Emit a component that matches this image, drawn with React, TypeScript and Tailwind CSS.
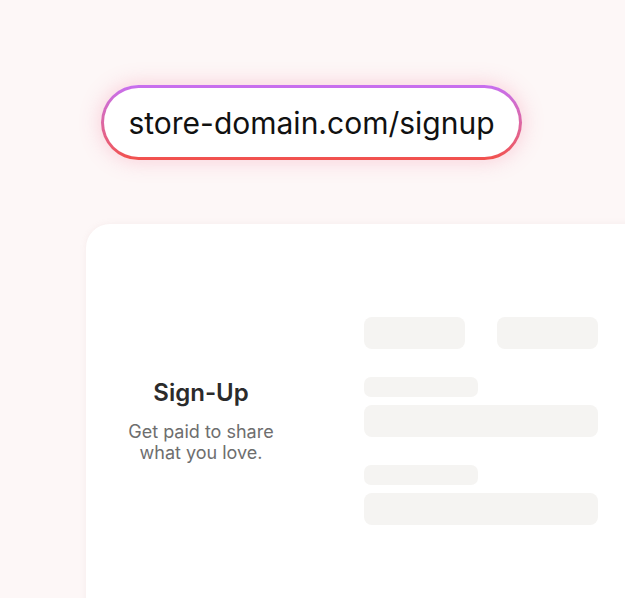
export default function App() {
  return (
    <div
      className="w-[625px] h-[598px] overflow-hidden bg-[#fdf7f7] pl-[86px] pt-[85px]"
      style={{ fontFamily: 'Inter, "Noto Sans", sans-serif' }}
    >
      {/* URL pill */}
      <div className="ml-[15px] w-[421px] h-[75px] rounded-full p-[3px] bg-gradient-to-b from-[#c76ef0] to-[#f2504a] shadow-[0_0_22px_rgba(240,90,130,0.28)]">
        <div className="w-full h-full rounded-full bg-white flex items-center justify-center">
          <span className="text-[30px] leading-none text-[#111111]">store-domain.com/signup</span>
        </div>
      </div>

      {/* Card */}
      <div className="mt-[64px] w-[600px] h-[420px] rounded-[24px] bg-white shadow-[0_0_6px_rgba(200,160,160,0.12)] pt-[93px]">
        <div className="flex items-center">
          <div className="w-[230px] flex flex-col items-center text-center">
            <h2 className="text-[24px] font-semibold text-[#2b2b2b] leading-[28px]">Sign-Up</h2>
            <p className="mt-[14px] text-[18px] leading-[21px] text-[#6e6e6e]">
              Get paid to share
              <br />
              what you love.
            </p>
          </div>
          <div className="ml-[48px] w-[234px] flex flex-col">
            <div className="flex gap-[32px]">
              <div className="w-[101px] h-[32px] rounded-[8px] bg-[#f5f4f2]" />
              <div className="w-[101px] h-[32px] rounded-[8px] bg-[#f5f4f2]" />
            </div>
            <div className="mt-[28px] w-[114px] h-[20px] rounded-[7px] bg-[#f5f4f2]" />
            <div className="mt-[8px] w-[234px] h-[32px] rounded-[8px] bg-[#f5f4f2]" />
            <div className="mt-[28px] w-[114px] h-[20px] rounded-[7px] bg-[#f5f4f2]" />
            <div className="mt-[8px] w-[234px] h-[32px] rounded-[8px] bg-[#f5f4f2]" />
          </div>
        </div>
      </div>
    </div>
  )
}
